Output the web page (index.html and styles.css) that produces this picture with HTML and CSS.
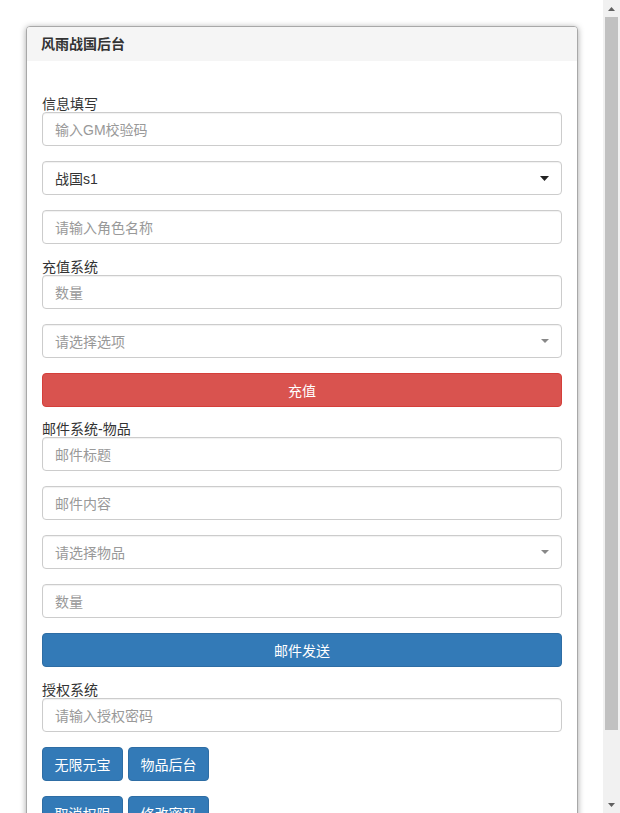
FILE: index.html
```html
<!DOCTYPE html>
<html lang="zh-CN">
<head>
<meta charset="utf-8">
<title>风雨战国后台</title>
<link rel="stylesheet" href="styles.css">
</head>
<body>
<div class="viewport">
  <div class="page">
    <div class="panel">
      <div class="panel-heading">风雨战国后台</div>
      <div class="panel-body">
        <div class="label">信息填写</div>
        <div class="field"><span class="ph">输入GM校验码</span></div>
        <div class="field select">
          <span class="val">战国s1</span>
          <svg class="caret" width="9" height="5" viewBox="0 0 9 5"><path d="M0 0H9L4.5 5Z" fill="#222"/></svg>
        </div>
        <div class="field"><span class="ph">请输入角色名称</span></div>

        <div class="label">充值系统</div>
        <div class="field"><span class="ph">数量</span></div>
        <div class="field select">
          <span class="ph">请选择选项</span>
          <svg class="caret" width="8" height="4" viewBox="0 0 8 4"><path d="M0 0H8L4 4Z" fill="#888"/></svg>
        </div>
        <div class="btn btn-danger btn-block">充值</div>

        <div class="label">邮件系统-物品</div>
        <div class="field"><span class="ph">邮件标题</span></div>
        <div class="field"><span class="ph">邮件内容</span></div>
        <div class="field select">
          <span class="ph">请选择物品</span>
          <svg class="caret" width="8" height="4" viewBox="0 0 8 4"><path d="M0 0H8L4 4Z" fill="#888"/></svg>
        </div>
        <div class="field"><span class="ph">数量</span></div>
        <div class="btn btn-primary btn-block">邮件发送</div>

        <div class="label">授权系统</div>
        <div class="field"><span class="ph">请输入授权密码</span></div>
        <div class="btn-row">
          <div class="btn btn-primary">无限元宝</div>
          <div class="btn btn-primary">物品后台</div>
        </div>
        <div class="btn-row">
          <div class="btn btn-primary">取消权限</div>
          <div class="btn btn-primary">修改密码</div>
        </div>
      </div>
    </div>
  </div>
</div>
<div class="scrollbar">
  <div class="sb-btn">
    <svg width="7" height="4" viewBox="0 0 7 4"><path d="M0 4H7L3.5 0Z" fill="#606060"/></svg>
  </div>
  <div class="sb-track"><div class="sb-thumb"></div></div>
  <div class="sb-btn">
    <svg width="7" height="4" viewBox="0 0 7 4"><path d="M0 0H7L3.5 4Z" fill="#606060"/></svg>
  </div>
</div>
</body>
</html>
```

FILE: styles.css
```css
html, body {
  margin: 0;
  padding: 0;
  background: #fff;
}
body {
  font-family: "Liberation Sans", "Noto Sans CJK SC", sans-serif;
  font-size: 14px;
  color: #333;
  display: flex;
  height: 813px;
  overflow: hidden;
}
.viewport {
  flex: 1;
  min-width: 0;
  overflow: hidden;
}
.scrollbar {
  width: 17px;
  flex: none;
  background: #f1f1f1;
  display: flex;
  flex-direction: column;
}
.sb-btn {
  height: 17px;
  display: flex;
  align-items: center;
  justify-content: center;
}
.sb-btn svg {
  display: block;
}
.sb-track {
  flex: 1;
}
.sb-thumb {
  height: 713px;
  margin: 0 2px;
  background: #c1c1c1;
}
.page {
  padding: 26px 25px 26px 26px;
}
.panel {
  border: 1px solid #a8a8a8;
  border-radius: 4px;
  box-shadow: 0 1px 6px rgba(0, 0, 0, 0.35);
  background: #fff;
}
.panel-heading {
  background: #f5f5f5;
  padding: 9px 14px;
  line-height: 16px;
  font-size: 14px;
  font-weight: bold;
  color: #333;
  border-radius: 3px 3px 0 0;
}
.panel-body {
  padding: 35px 15px 15px 15px;
}
.label {
  line-height: 16px;
  font-size: 14px;
  color: #333;
}
.field {
  height: 34px;
  box-sizing: border-box;
  border: 1px solid #ccc;
  border-radius: 4px;
  padding: 0 12px;
  display: flex;
  align-items: center;
  margin-bottom: 15px;
  box-shadow: inset 0 1px 1px rgba(0, 0, 0, 0.06);
}
.ph {
  color: #999;
}
.val {
  color: #333;
}
.select {
  justify-content: space-between;
  padding-right: 12px;
}
.caret {
  display: block;
}
.btn {
  height: 34px;
  box-sizing: border-box;
  padding: 0 11.5px;
  border: 1px solid transparent;
  border-radius: 4px;
  color: #fff;
  display: flex;
  align-items: center;
  justify-content: center;
  margin-bottom: 15px;
}
.btn-danger {
  background: #d9534f;
  border-color: #d43f3a;
  margin-bottom: 14px;
}
.btn-primary {
  background: #337ab7;
  border-color: #2e6da4;
}
.btn-row {
  display: flex;
  gap: 5px;
}
```
